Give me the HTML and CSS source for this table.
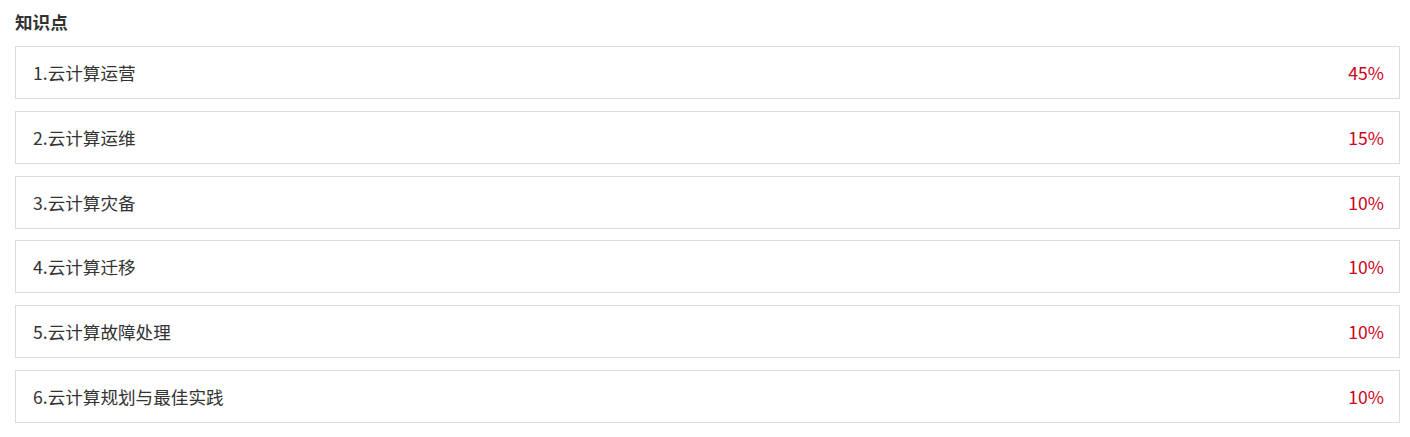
FILE: index.html
```html
<!DOCTYPE html>
<html lang="zh">
<head>
<meta charset="utf-8">
<title>知识点</title>
<link rel="stylesheet" href="styles.css">
</head>
<body>
<div class="panel">
  <h3 class="title">知识点</h3>
  <ul class="list">
    <li class="item"><span class="name">1.云计算运营</span><span class="pct">45%</span></li>
    <li class="item"><span class="name">2.云计算运维</span><span class="pct">15%</span></li>
    <li class="item"><span class="name">3.云计算灾备</span><span class="pct">10%</span></li>
    <li class="item"><span class="name">4.云计算迁移</span><span class="pct">10%</span></li>
    <li class="item"><span class="name">5.云计算故障处理</span><span class="pct">10%</span></li>
    <li class="item"><span class="name">6.云计算规划与最佳实践</span><span class="pct">10%</span></li>
  </ul>
</div>
</body>
</html>
```

FILE: styles.css
```css
html, body {
  margin: 0;
  padding: 0;
  background: #fff;
}
body {
  font-family: "Microsoft YaHei", "Noto Sans CJK SC", "Liberation Sans", sans-serif;
  color: #333;
}
.panel {
  padding: 9px 10px 0 15px;
}
.title {
  margin: 0;
  font-size: 17.6px;
  font-weight: bold;
  line-height: 26px;
  color: #333;
}
.list {
  list-style: none;
  margin: 11px 0 0 0;
  padding: 0;
  display: flex;
  flex-direction: column;
  gap: 11.8px;
}
.item {
  display: flex;
  justify-content: space-between;
  align-items: center;
  height: 53px;
  box-sizing: border-box;
  border: 1px solid #dcdcdc;
  padding: 0 15px 0 17px;
  font-size: 17.6px;
}
.name {
  color: #333;
}
.pct {
  color: #d0021b;
}
```
